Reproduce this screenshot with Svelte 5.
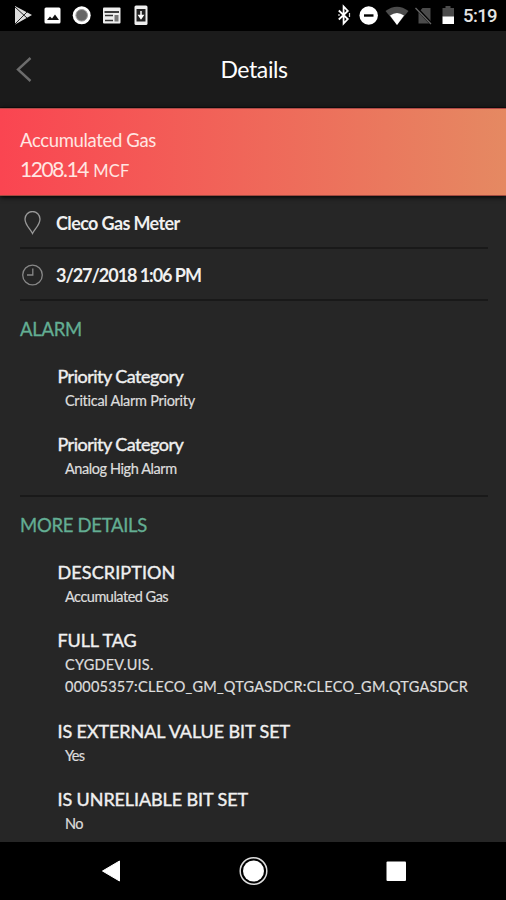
<script>
  const alarm = [
    { label: "Priority Category", value: ["Critical Alarm Priority"], tracking: -0.52, valueTracking: -0.27 },
    { label: "Priority Category", value: ["Analog High Alarm"], tracking: -0.52, valueTracking: -0.42 }
  ];

  const details = [
    { label: "DESCRIPTION", value: ["Accumulated Gas"], tracking: 0.1, valueTracking: -0.5 },
    {
      label: "FULL TAG",
      value: ["CYGDEV.UIS.", "00005357:CLECO_GM_QTGASDCR:CLECO_GM.QTGASDCR"],
      tracking: -0.1,
      valueTracking: 0.23
    },
    { label: "IS EXTERNAL VALUE BIT SET", value: ["Yes"], tracking: -0.1, valueTracking: -0.7 },
    { label: "IS UNRELIABLE BIT SET", value: ["No"], tracking: -0.1, valueTracking: -0.5 }
  ];
</script>

{#snippet field(item)}
  <div class="field">
    <div class="label" style="letter-spacing: {item.tracking}px">{item.label}</div>
    <div class="value" style="letter-spacing: {item.valueTracking}px">
      {#each item.value as line}
        <div>{line}</div>
      {/each}
    </div>
  </div>
{/snippet}

<main>
  <div class="status">
    <svg width="160" height="30" viewBox="0 0 160 30">
      <path d="M15 6L32 15 15 24.500z" fill="#ddd" />
      <path d="M15 7l12 11M15 24l12-12" stroke="#222" stroke-width="1" fill="none" />
      <rect x="44.500" y="7.500" width="16" height="16" rx="1.500" fill="#fff" />
      <path d="M47 20l3-3.500 2 2 3-4 4 5.500z" fill="#111" />
      <circle cx="81.700" cy="15.300" r="9" fill="#fff" />
      <circle cx="81.700" cy="15.300" r="5.800" fill="#666" stroke="#999" />
      <rect x="103" y="7.500" width="17.500" height="16" rx="1" fill="#eee" />
      <path d="M104.500 12h14.500" stroke="#111" stroke-width="1.600" />
      <path d="M105 15.500h8M105 20.500h8" stroke="#333" stroke-width="1.500" />
      <rect x="114.500" y="15" width="4" height="6.500" fill="#777" />
      <rect x="134.500" y="5.500" width="13" height="19.500" rx="1.500" fill="#eee" />
      <rect x="136.500" y="9" width="9" height="12.500" fill="#222" />
      <path d="M141 11v5M139 15.500l2 3 2-3z" stroke="#fff" stroke-width="1.500" fill="#fff" />
    </svg>
    <svg class="right" width="126" height="30" viewBox="334 0 126 30">
      <path d="M338.800 10.500l9 8.500-4.200 4.500V6.500l4.200 4.500-9 8.500" fill="none" stroke="#fff" stroke-width="1.800" />
      <path d="M349.500 13v4M339 14v2" stroke="#ddd" stroke-width="1.200" />
      <circle cx="368.700" cy="15.500" r="9.200" fill="#fff" />
      <path d="M364 15.500h9.500" stroke="#000" stroke-width="2.400" />
      <path d="M385.500 11q11.500-8.500 23 0L397 25z" fill="#4b4b4b" />
      <path d="M390 15.500q7-5 14 0l-7 9.500z" fill="#fff" />
      <path d="M430.500 22.500V8h-8l-4 4.500v11h11z" fill="#4b4b4b" />
      <path d="M416 7.500l15.500 16.500" stroke="#000" stroke-width="3" />
      <path d="M415.500 8l15.500 16" stroke="#666" stroke-width="1.300" />
      <path d="M442.500 8h3V6h5v2h3.500v9h-11.500z" fill="#4b4b4b" />
      <path d="M442.500 16.500H454V24h-11.500z" fill="#fff" />
    </svg>
    <span class="time">5:19</span>
  </div>

  <header>
    <svg width="20" height="28" viewBox="0 0 20 28">
      <path d="M16.500 3L4 14.500 16.500 26" fill="none" stroke="#6c6c6c" stroke-width="2.400" />
    </svg>
    <h1>Details</h1>
  </header>

  <div class="banner">
    <div class="name">Accumulated Gas</div>
    <div class="amount">1208.14 <small>MCF</small></div>
  </div>

  <div class="content">
    <div class="row place">
      <svg width="24" height="24" viewBox="0 0 24 24">
        <path d="M12.500 22.500C10 17.500 5 14 5 8a7.500 7.500 0 0 1 15 0c0 6-5 9.500-7.500 14.500z" fill="none" stroke="#999" stroke-width="1.300" />
      </svg>
      <span>Cleco Gas Meter</span>
    </div>
    <div class="row when">
      <svg width="24" height="24" viewBox="0 0 24 24">
        <circle cx="12.500" cy="12" r="9.800" fill="none" stroke="#888" stroke-width="1.300" />
        <path d="M12.800 5.500V12H7" fill="none" stroke="#888" stroke-width="1.300" />
      </svg>
      <span>3/27/2018 1:06 PM</span>
    </div>

    <section class="alarm">
      <h2>ALARM</h2>
      {#each alarm as item}
        {@render field(item)}
      {/each}
    </section>
    <section>
      <h2>MORE DETAILS</h2>
      {#each details as item}
        {@render field(item)}
      {/each}
    </section>
  </div>

  <nav>
    <svg width="506" height="58" viewBox="0 842 506 58">
      <path d="M102.500 871L119.500 861v20z" fill="#fff" stroke="#fff" stroke-linejoin="round" />
      <circle cx="253.500" cy="871" r="13.300" fill="none" stroke="#ddd" stroke-width="1.500" />
      <circle cx="253.500" cy="871" r="10.500" fill="#fff" />
      <rect x="386.500" y="861.500" width="19.500" height="19.500" rx="1" fill="#fff" />
    </svg>
  </nav>
</main>

<style>
  :global(body) {
    margin: 0;
    background: #000;
  }
  main {
    width: 506px;
    height: 900px;
    display: flex;
    flex-direction: column;
    overflow: hidden;
    background: #262626;
    color: #f0f0f0;
    font-family: Lato, sans-serif;
    white-space: nowrap;
  }
  .status {
    display: flex;
    flex: none;
    height: 31px;
    background: #000;
  }
  .right {
    margin-left: 174px;
  }
  .time {
    margin-left: 3px;
    font: 500 18.5px/32px Roboto, sans-serif;
    letter-spacing: -0.6px;
    color: #e4e4e4;
  }
  header {
    display: grid;
    grid-template-columns: 40px 1fr 38px;
    align-items: center;
    flex: none;
    height: 77px;
    box-sizing: border-box;
    background: #1b1b1b;
    border-bottom: 1px solid #111;
  }
  header svg {
    margin-left: 14px;
  }
  h1 {
    margin: 0;
    font-size: 23px;
    font-weight: 400;
    letter-spacing: -0.4px;
    text-align: center;
    color: #fff;
  }
  .banner {
    flex: none;
    height: 88px;
    box-sizing: border-box;
    padding: 17px 20px 0;
    background: linear-gradient(90deg, #fa4551, #e58962);
    border-top: 1px solid #b04a48;
    border-bottom: 1px solid #a04a40;
    box-shadow: 0 1px 5px #000;
    color: #ffe6e2;
  }
  .name {
    font-size: 18.5px;
    line-height: 28px;
    letter-spacing: -0.35px;
  }
  .amount {
    font-size: 21px;
    line-height: 30px;
    letter-spacing: -1.45px;
  }
  small {
    margin-left: 1.5px;
    font-size: 16.5px;
    letter-spacing: 0.2px;
  }
  .content {
    display: flex;
    flex-direction: column;
    flex: 1;
    min-height: 0;
    overflow: hidden;
    padding: 0 18px 0 20px;
  }
  .row {
    display: flex;
    align-items: center;
    flex: none;
    gap: 12px;
    box-sizing: border-box;
    height: 52px;
    border-bottom: 2px solid #191919;
    font-size: 18px;
    font-weight: 700;
  }
  .place {
    height: 53px;
    padding-top: 3px;
    letter-spacing: -0.62px;
  }
  .when {
    padding-top: 1px;
    letter-spacing: -1.05px;
  }
  section {
    flex: none;
    padding-top: 16px;
  }
  h2 {
    margin: 0 0 23px;
    font-size: 18.5px;
    line-height: 24px;
    font-weight: 400;
    letter-spacing: -0.3px;
    color: #63ae93;
    -webkit-text-stroke: 0.3px;
  }
  .alarm {
    height: 196px;
    box-sizing: border-box;
    border-bottom: 2px solid #191919;
  }
  .field {
    margin: 0 0 20.3px 37.5px;
  }
  .label {
    font-size: 18px;
    line-height: 25px;
    -webkit-text-stroke: 0.4px;
  }
  .value {
    margin: 1px 0 0 7.500px;
    font-size: 14.5px;
    line-height: 22px;
    color: #ddd;
    -webkit-text-stroke: 0.2px;
  }
  nav {
    flex: none;
    height: 58px;
    background: #000;
  }
</style>
